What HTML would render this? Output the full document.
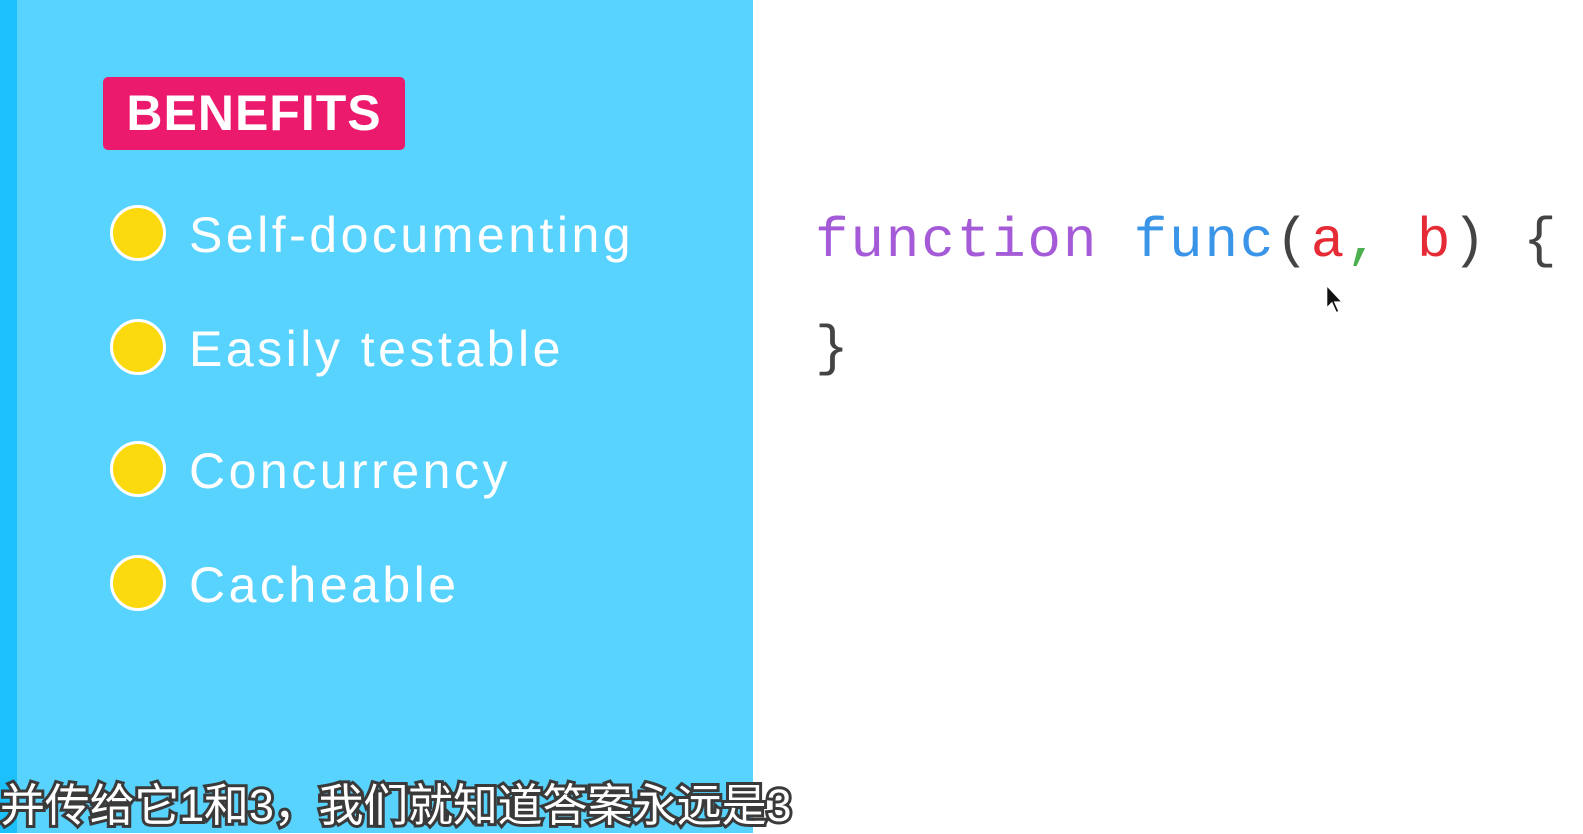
<!DOCTYPE html>
<html><head><meta charset="utf-8"><style>
body{margin:0;width:1583px;height:833px;background:#fff;position:relative;overflow:hidden;font-family:"Liberation Sans",sans-serif}
.stripe{position:absolute;left:0;top:0;width:17px;height:833px;background:#1cc1fc}
.panel{position:absolute;left:17px;top:0;width:736px;height:833px;background:#57d3fd}
.badge{position:absolute;left:103px;top:77px;width:302px;height:73px;background:#ec1a6c;border-radius:5px;color:#fff;font-weight:bold;font-size:50px;line-height:73px;text-align:center;letter-spacing:1px}
.dot{position:absolute;left:110px;width:50px;height:50px;border-radius:50%;background:#fbd90f;border:3px solid #fff}
.item{position:absolute;left:189px;color:#fff;font-size:50px;line-height:60px;letter-spacing:3.5px}
.code{position:absolute;left:815px;font-family:"Liberation Mono",monospace;font-size:56px;letter-spacing:1.8px;color:#444;white-space:pre}
.sub{position:absolute;left:0;top:778px;font-family:"Liberation Sans","Noto Sans CJK SC",sans-serif;font-size:45px;line-height:56px;color:#fff;-webkit-text-stroke:6px #3a3a3a;paint-order:stroke fill;white-space:nowrap;letter-spacing:-0.2px}
</style></head><body>
<div class="stripe"></div><div class="panel"></div>
<div class="badge">BENEFITS</div>
<div class="dot" style="top:205px"></div><div class="item" style="top:205px">Self-documenting</div>
<div class="dot" style="top:319px"></div><div class="item" style="top:319px">Easily testable</div>
<div class="dot" style="top:441px"></div><div class="item" style="top:441px">Concurrency</div>
<div class="dot" style="top:555px"></div><div class="item" style="top:555px">Cacheable</div>
<div class="code" style="top:209px"><span style="color:#a55bd8">function</span> <span style="color:#3a95e8">func</span>(<span style="color:#e52b36">a</span><span style="color:#4caf50">,</span> <span style="color:#e52b36">b</span>) {</div>
<div class="code" style="top:317px">}</div>
<svg style="position:absolute;left:1324px;top:283px" width="22" height="34" viewBox="0 0 20 32"><path d="M2 2 L2 24 L7 19 L11 28 L14 27 L10 18 L17 18 Z" fill="#111" stroke="#fff" stroke-width="1.5"/></svg>
<div class="sub">并传给它1和3，我们就知道答案永远是3</div>
</body></html>
